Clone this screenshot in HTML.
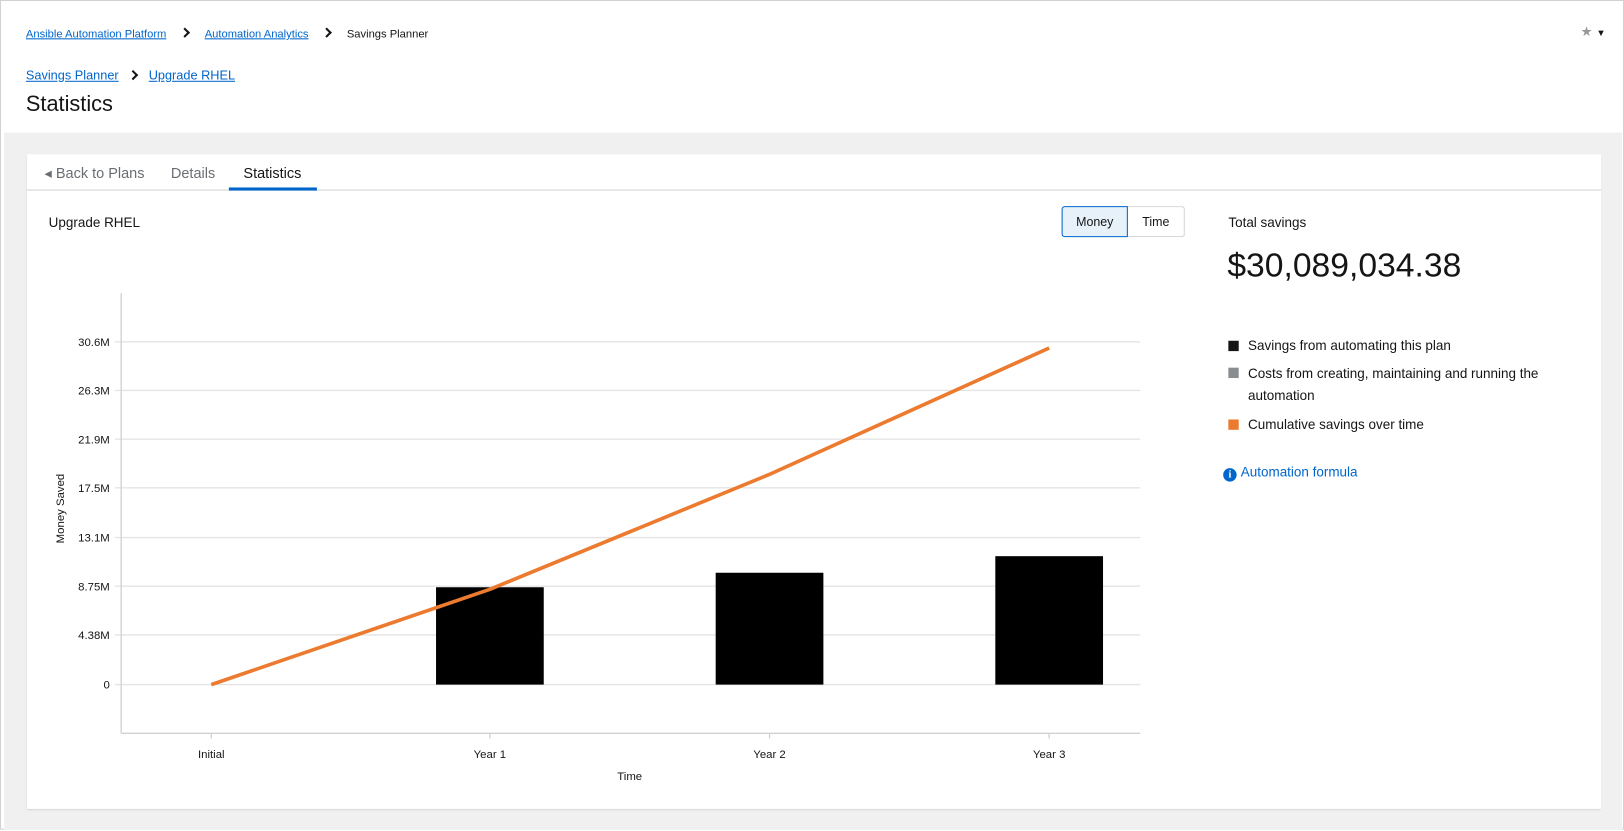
<!DOCTYPE html>
<html><head><meta charset="utf-8"><style>
html,body{margin:0;padding:0;width:1624px;height:830px;overflow:hidden;background:#fff;font-family:"Liberation Sans",sans-serif;color:#151515}
#w{position:absolute;left:0;top:0;width:1568px;height:801px;transform:scale(1.03571);transform-origin:0 0;background:#fff;border:1px solid #d2d2d2;box-sizing:border-box}
a{color:#0066cc;text-decoration:underline}
.abs{position:absolute}
.chev{display:inline-block;width:5px;height:5px;border-right:2px solid #151515;border-top:2px solid #151515;transform:rotate(45deg);vertical-align:1px}
</style></head><body><div id="w">
<div class="abs" style="left:24px;top:26px;font-size:10.8px"><a>Ansible Automation Platform</a><span style="margin:0 16px 0 14px"><span class="chev"></span></span><a>Automation Analytics</a><span style="margin:0 16px 0 14px"><span class="chev"></span></span>Savings Planner</div>
<div class="abs" style="left:1525px;top:22px;color:#999;font-size:13px">★ <span style="color:#151515;font-size:9px">▼</span></div>
<div class="abs" style="left:24px;top:65px;font-size:12.3px"><a>Savings Planner</a><span style="margin:0 12px 0 10px"><span class="chev"></span></span><a>Upgrade RHEL</a></div>
<div class="abs" style="left:24px;top:88px;font-size:21px">Statistics</div>
<div class="abs" style="left:3px;top:127px;width:1562px;height:673px;background:#f0f0f0"></div>
<div class="abs" style="left:25px;top:148px;width:1520px;height:632px;background:#fff;box-shadow:0 1px 2px rgba(0,0,0,.15)">
 <div class="abs" style="left:0;top:34px;width:1520px;height:1px;background:#d2d2d2"></div>
 <div class="abs" style="left:17px;top:10px;font-size:14px;color:#6a6e73">◂ Back to Plans</div>
 <div class="abs" style="left:139px;top:10px;font-size:14px;color:#6a6e73">Details</div>
 <div class="abs" style="left:209px;top:10px;font-size:14px">Statistics</div>
 <div class="abs" style="left:195px;top:32px;width:85px;height:3px;background:#0066cc"></div>
 <div class="abs" style="left:21px;top:58px;font-size:13px">Upgrade RHEL</div>
 <div class="abs" style="left:999px;top:50px;width:64px;height:30px;border:1px solid #0066cc;background:#e7f1fa;box-sizing:border-box;border-radius:3px 0 0 3px;font-size:12px;text-align:center;line-height:28px">Money</div>
 <div class="abs" style="left:1063px;top:50px;width:55px;height:30px;border:1px solid #d2d2d2;border-left:none;box-sizing:border-box;border-radius:0 3px 3px 0;font-size:12px;text-align:center;line-height:28px">Time</div>
 <div class="abs" style="left:1160px;top:58px;font-size:13px">Total savings</div>
 <div class="abs" style="left:1159px;top:89px;font-size:32.5px">$30,089,034.38</div>
 <div class="abs" style="left:1160px;top:176px;font-size:13px;line-height:18px;width:340px">
  <div style="position:relative;padding-left:19px;margin-bottom:9px"><span style="position:absolute;left:0;top:4px;width:10px;height:10px;background:#151515"></span>Savings from automating this plan</div>
  <div style="position:relative;padding-left:19px;margin-bottom:9px;line-height:21px;margin-top:-2px"><span style="position:absolute;left:0;top:5px;width:10px;height:10px;background:#8a8d90"></span>Costs from creating, maintaining and running the automation</div>
  <div style="position:relative;padding-left:19px"><span style="position:absolute;left:0;top:4px;width:10px;height:10px;background:#ec7a2f"></span>Cumulative savings over time</div>
 </div>
 <div class="abs" style="left:1155px;top:299px;font-size:13px;color:#0066cc"><span style="display:inline-block;width:13px;height:13px;border-radius:50%;background:#0066cc;color:#fff;font-size:10px;font-weight:bold;text-align:center;line-height:13px;vertical-align:-1px;margin-right:4px;font-family:'Liberation Serif',serif">i</span>Automation formula</div>
</div>
<svg class="abs" style="left:0;top:0" width="1568" height="801" font-family="Liberation Sans" font-size="11" fill="#151515">
 <g stroke="#e4e4e4" stroke-width="1.3">
  <line x1="110" y1="329" x2="1100" y2="329"/><line x1="110" y1="376" x2="1100" y2="376"/><line x1="110" y1="423" x2="1100" y2="423"/><line x1="110" y1="470" x2="1100" y2="470"/><line x1="110" y1="518" x2="1100" y2="518"/><line x1="110" y1="565" x2="1100" y2="565"/><line x1="110" y1="612" x2="1100" y2="612"/><line x1="110" y1="660" x2="1100" y2="660"/>
 </g>
 <g stroke="#d2d2d2" stroke-width="1.3"><line x1="116" y1="282" x2="116" y2="707"/><line x1="116" y1="707" x2="1100" y2="707"/>
  <line x1="203" y1="707" x2="203" y2="712"/><line x1="472" y1="707" x2="472" y2="712"/><line x1="742" y1="707" x2="742" y2="712"/><line x1="1012" y1="707" x2="1012" y2="712"/></g>
 <g text-anchor="end"><text x="105" y="333">30.6M</text><text x="105" y="380">26.3M</text><text x="105" y="427">21.9M</text><text x="105" y="474">17.5M</text><text x="105" y="522">13.1M</text><text x="105" y="569">8.75M</text><text x="105" y="616">4.38M</text><text x="105" y="664">0</text></g>
 <text transform="translate(61,490) rotate(-90)" text-anchor="middle">Money Saved</text>
 <g text-anchor="middle"><text x="203" y="731">Initial</text><text x="472" y="731">Year 1</text><text x="742" y="731">Year 2</text><text x="1012" y="731">Year 3</text><text x="607" y="752">Time</text></g>
 <rect x="420" y="566" width="104" height="94" fill="#000"/><rect x="690" y="552" width="104" height="108" fill="#000"/><rect x="960" y="536" width="104" height="124" fill="#000"/>
 <polyline points="203,660 472,568 742,457 1012,335" fill="none" stroke="#ec7a2f" stroke-width="3.5"/>
</svg>
</div></body></html>
